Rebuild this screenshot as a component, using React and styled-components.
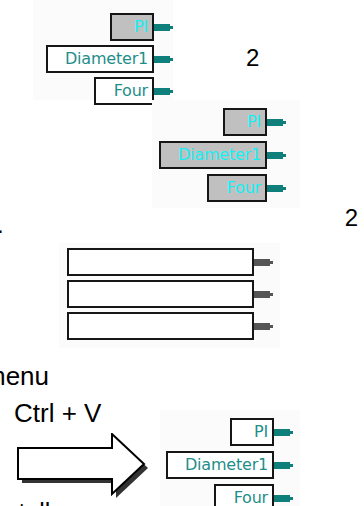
import { styled, createGlobalStyle } from 'styled-components';

const GlobalStyle = createGlobalStyle`
  html, body { margin: 0; padding: 0; background: #fff; }
  body { font-family: "Liberation Sans", Arial, sans-serif; color: #000; }
`;

const Slide = styled.div`
  width: 364px;
  height: 506px;
  overflow: hidden;
  display: flex;
  flex-direction: column;
  background: #fff;
`;

const Row = styled.div`
  display: flex;
  align-items: flex-start;
  justify-content: ${({ spread }) => (spread ? 'space-between' : 'flex-start')};
  height: ${({ h }) => h}px;
  flex-shrink: 0;
`;

const Panel = styled.div`
  display: flex;
  flex-direction: column;
  align-items: flex-end;
  gap: ${({ gap }) => gap ?? 4}px;
  width: ${({ w }) => w}px;
  height: ${({ h }) => (h ? `${h}px` : 'auto')};
  margin-left: ${({ left }) => left ?? 0}px;
  margin-top: ${({ top }) => top ?? 0}px;
  padding: ${({ pad }) => pad};
  box-sizing: border-box;
  background: #fbfbfb;
  flex-shrink: 0;
`;

const PortRow = styled.div`
  display: flex;
  align-items: center;
`;

const PortBox = styled.div`
  width: ${({ w }) => w}px;
  height: 28px;
  box-sizing: border-box;
  border: 2px solid #161616;
  background: ${({ variant }) => (variant === 'gray' ? '#c0c0c0' : '#fff')};
  color: ${({ variant }) => (variant === 'gray' ? '#14f0f4' : '#1f8e8a')};
  font-family: "DejaVu Sans", Verdana, sans-serif;
  font-size: 16px;
  letter-spacing: -0.2px;
  line-height: 24px;
  text-align: right;
  padding-right: 4px;
  white-space: nowrap;
`;

const Connector = styled.span`
  position: relative;
  display: block;
  width: 16px;
  height: 7px;
  margin-right: 3px;
  background: ${({ dark }) => (dark ? '#555' : '#0e7f7b')};

  &::after {
    content: '';
    position: absolute;
    right: -3px;
    top: 2px;
    width: 3px;
    height: 3px;
    background: ${({ dark }) => (dark ? '#555' : '#0e7f7b')};
  }
`;

const Text = styled.div`
  font-size: ${({ size }) => size ?? 24}px;
  line-height: ${({ size }) => size ?? 24}px;
  margin-top: ${({ top }) => top ?? 0}px;
  margin-left: ${({ left }) => left ?? 0}px;
  margin-right: ${({ right }) => right ?? 0}px;
  white-space: nowrap;
  flex-shrink: 0;
`;

const Column = styled.div`
  display: flex;
  flex-direction: column;
  width: ${({ w }) => w}px;
  flex-shrink: 0;
`;

const ArrowWrap = styled.div`
  margin: 7px 0 0 17px;
  width: 131px;
  height: 65px;
`;

const Port = ({ label, w, variant }) => (
  <PortRow>
    <PortBox w={w} variant={variant}>{label}</PortBox>
    <Connector dark={variant === 'empty'} />
  </PortRow>
);

const ports = [
  { label: 'PI', w: 44 },
  { label: 'Diameter1', w: 108 },
  { label: 'Four', w: 60 },
];

const Arrow = () => (
  <ArrowWrap>
    <svg width="131" height="65" viewBox="0 0 131 65">
      <polygon points="5,19 99,19 99,5 131,35 99,65 99,50 5,50" fill="#333" />
      <polygon
        points="1,15 95,15 95,1 127,31 95,61 95,46 1,46"
        fill="#fff"
        stroke="#000"
        strokeWidth="2"
        strokeLinejoin="miter"
      />
    </svg>
  </ArrowWrap>
);

export default function App() {
  return (
    <>
      <GlobalStyle />
      <Slide>
        <Row h={100}>
          <Panel w={140} h={100} left={33} pad="13px 0 0 13px">
            <Port {...ports[0]} variant="gray" />
            <Port {...ports[1]} variant="white" />
            <Port {...ports[2]} variant="white" />
          </Panel>
          <Text left={73} top={46}>2</Text>
        </Row>

        <Row h={108}>
          <Panel w={148} h={108} left={152} pad="8px 14px 0 7px" gap={5}>
            {ports.map((p) => (
              <Port key={p.label} {...p} variant="gray" />
            ))}
          </Panel>
        </Row>

        <Row h={35} spread>
          <Text left={-3} top={5}>.</Text>
          <Text top={-2} right={6}>2</Text>
        </Row>

        <Row h={105}>
          <Panel w={221} h={105} left={59} pad="5px 7px 0 9px" gap={4}>
            <Port w={187} variant="empty" />
            <Port w={187} variant="empty" />
            <Port w={187} variant="empty" />
          </Panel>
        </Row>

        <Row h={44}>
          <Text size={26} left={-16} top={15}>menu</Text>
        </Row>

        <Row h={114}>
          <Column w={160}>
            <Text size={26} left={14} top={8}>Ctrl + V</Text>
            <Arrow />
            <Text size={25} left={-8} top={2}>nstall</Text>
          </Column>
          <Panel w={140} top={18} pad="8px 7px 0 8px" gap={5}>
            {ports.map((p) => (
              <Port key={p.label} {...p} variant="white" />
            ))}
          </Panel>
        </Row>
      </Slide>
    </>
  );
}
